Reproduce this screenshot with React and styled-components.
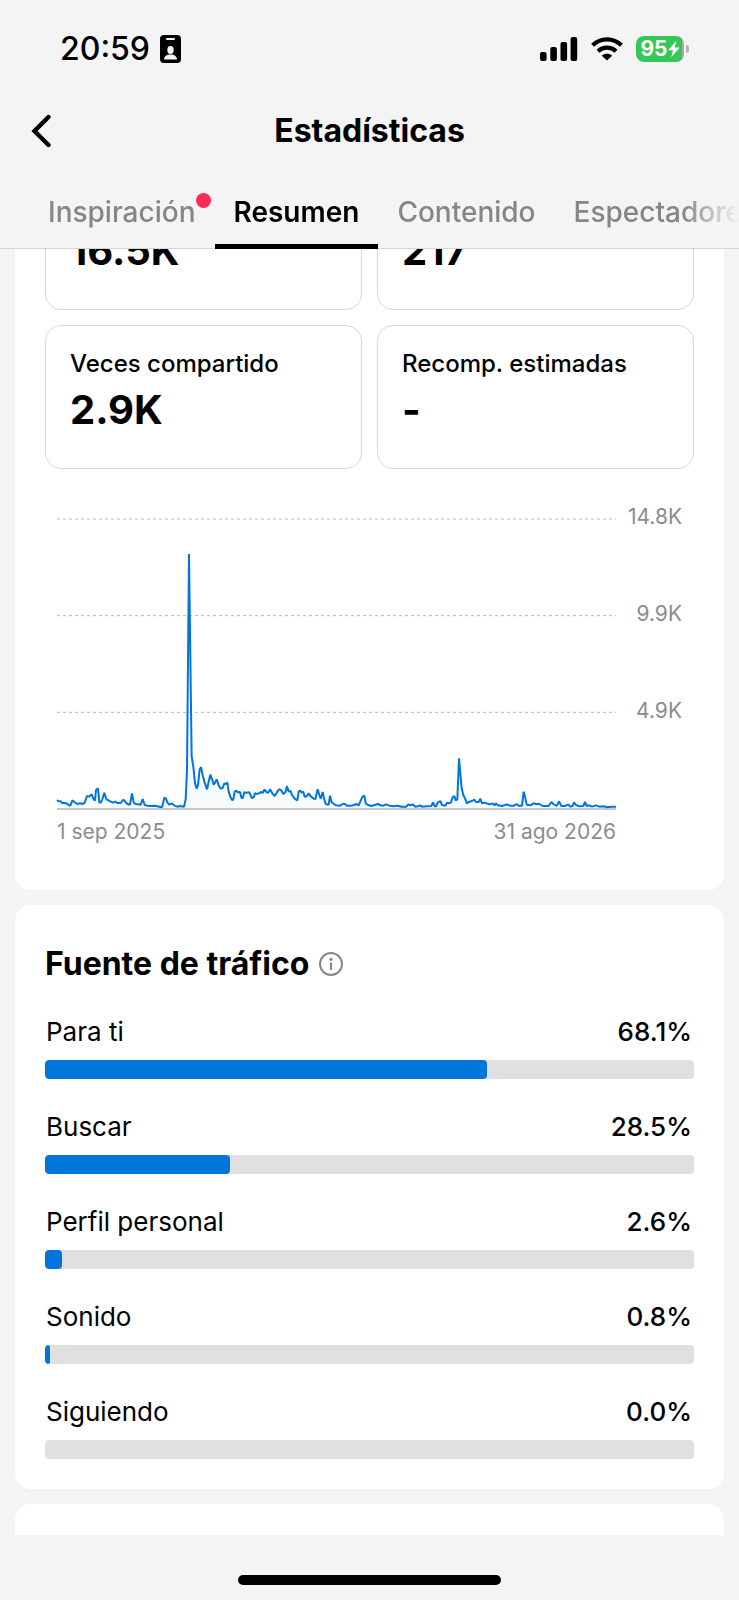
import { useLayoutEffect, useRef } from 'react';
import styled, { createGlobalStyle } from 'styled-components';

const GlobalStyle = createGlobalStyle`
    * {
        box-sizing: border-box;
    }

    body {
        margin: 0;
        background: #f4f4f4;
        color: #000;
        font-family: Inter, "Liberation Sans", sans-serif;
    }

    h1, h2, p, dl, dt, dd, ul {
        margin: 0;
        padding: 0;
    }
`

const Screen = styled.div`
    display: flex;
    flex-direction: column;
    height: 100vh;
    overflow: hidden;
`

// status bar
const StatusBar = styled.div`
    display: flex;
    flex-shrink: 0;
    justify-content: space-between;
    align-items: center;
    height: 98px;
    padding: 0 50px 0 60px;
`

const StatusGroup = styled.div`
    display: flex;
    align-items: center;
    gap: ${({ $gap }) => $gap}px;
`

const Clock = styled.span`
    font-size: 32px;
    font-weight: 500;
    line-height: 40px;
`

const Battery = styled.div`
    display: flex;
    align-items: center;
    gap: 2px;
`

const BatteryBody = styled.div`
    display: flex;
    justify-content: center;
    align-items: center;
    width: 48px;
    height: 26px;
    border-radius: 8px;
    background: linear-gradient(to right, #34c759 46px, #a9a9a9 46px);
    color: #fff;
    font-size: 21px;
    font-weight: 700;
    line-height: 26px;
`

const BatteryCap = styled.span`
    width: 3px;
    height: 8px;
    border-radius: 0 3px 3px 0;
    background: #b4b4b4;
`

// page header
const Header = styled.header`
    display: grid;
    grid-template-columns: 60px 1fr 60px;
    flex-shrink: 0;
    align-items: center;
    height: 66px;
    padding: 0 15px;

    h1 {
        font-size: 32px;
        font-weight: 700;
        line-height: 40px;
        text-align: center;
    }
`

const BackButton = styled.button`
    display: flex;
    align-items: center;
    width: 48px;
    height: 48px;
    padding: 0 0 0 16px;
    border: 0;
    background: none;
    color: #000;
`

const TabBar = styled.nav`
    flex-shrink: 0;
    overflow: hidden;
    box-shadow: inset 0 -1px 0 #d6d6d6;
`

const TabList = styled.div`
    display: flex;
    height: 85px;
    padding-left: 29px;
    mask-image: linear-gradient(to right, #000 calc(100% - 56px), transparent);
`

const Tab = styled.a`
    position: relative;
    flex-shrink: 0;
    padding: 24px 19px 0;
    border-bottom: 5px solid ${({ $active }) => ($active ? '#000' : 'transparent')};
    color: ${({ $active }) => ($active ? '#000' : '#868686')};
    font-size: 28px;
    font-weight: ${({ $active }) => ($active ? 600 : 500)};
    line-height: 48px;
    text-decoration: none;
`

const Dot = styled.span`
    position: absolute;
    top: 29px;
    right: 4px;
    width: 15px;
    height: 15px;
    border-radius: 50%;
    background: #fe2c55;
`

// scrolling content
const Content = styled.main`
    display: flex;
    flex: 1;
    flex-direction: column;
    gap: 15px;
    min-height: 0;
    padding: 0 15px;
    overflow-y: auto;
    scrollbar-width: none;
`

const Card = styled.section`
    flex-shrink: 0;
    min-height: 200px;
    padding: ${({ $padding }) => $padding || '30px'};
    border-radius: 16px;
    background: #fff;
`

const StatGrid = styled.dl`
    display: grid;
    grid-template-columns: 1fr 1fr;
    gap: 15px;
`

const Stat = styled.div`
    height: 144px;
    padding: 22px 24px;
    border: 1px solid #d9d9d9;
    border-radius: 16px;

    dt {
        min-height: 32px;
        font-size: 24px;
        font-weight: 500;
        line-height: 32px;
        white-space: nowrap;
    }

    dd {
        font-size: 40px;
        font-weight: 700;
        line-height: 60px;
    }
`

const ChartBox = styled.div`
    display: grid;
    grid-template-columns: 1fr 66px;
    row-gap: 10px;
    margin-top: 36px;
    padding: 0 12px;
    color: #8c8c8c;
    font-size: 21px;
    line-height: 24px;
`

const Plot = styled.svg`
    display: block;
    width: 100%;
    height: 305px;
    overflow: visible;
`

const YLabels = styled.div`
    display: flex;
    flex-direction: column;
    gap: 73px;
    text-align: right;
`

const XLabels = styled.div`
    display: flex;
    justify-content: space-between;
`

const SectionTitle = styled.div`
    display: flex;
    align-items: center;
    gap: 9px;
    margin-bottom: 30px;

    h2 {
        font-size: 32px;
        font-weight: 700;
        line-height: 40px;
    }
`

const InfoButton = styled.button`
    display: flex;
    padding: 0;
    border: 0;
    background: none;
    color: #868686;
`

const SourceList = styled.ul`
    display: flex;
    flex-direction: column;
    gap: 30px;
    list-style: none;
`

const SourceLabel = styled.div`
    display: flex;
    justify-content: space-between;
    margin-bottom: 10px;
    padding: 0 2px 0 1px;
    font-size: 26px;
    line-height: 36px;
`

const SourceValue = styled.span`
    font-weight: 500;
`

const Track = styled.div`
    height: 19px;
    border-radius: 4px;
    background: #e0e0e0;
    overflow: hidden;
`

const Fill = styled.div`
    height: 100%;
    border-radius: 4px;
    background: #0075dc;
`

const HomeArea = styled.footer`
    display: flex;
    flex-shrink: 0;
    justify-content: center;
    height: 65px;
    padding-top: 40px;
`

const HomeIndicator = styled.div`
    width: 263px;
    height: 10px;
    border-radius: 5px;
    background: #000;
`

const tabs = [
    { label: 'Inspiración', dot: true },
    { label: 'Resumen', active: true },
    { label: 'Contenido' },
    { label: 'Espectadores' },
];

const stats = [
    { value: '16.5K' },
    { value: '217' },
    { label: 'Veces compartido', value: '2.9K' },
    { label: 'Recomp. estimadas', value: '-' },
];

const sources = [
    { label: 'Para ti', value: 68.1 },
    { label: 'Buscar', value: 28.5 },
    { label: 'Perfil personal', value: 2.6 },
    { label: 'Sonido', value: 0.8 },
    { label: 'Siguiendo', value: 0 },
];

// [position on the time axis, height over the baseline]
const series = [
    [0, 27], [5, 23], [11, 23], [16, 18], [23, 18], [31, 16], [37, 10], [41, 12], [46, 26], [53, 20],
    [61, 15], [69, 17], [77, 15], [83, 19], [90, 39], [96, 37], [104, 44], [109, 31], [114, 25], [117, 57],
    [123, 62], [127, 20], [131, 19], [136, 29], [142, 49], [148, 29], [155, 26], [163, 21], [169, 19], [175, 22],
    [181, 18], [191, 18], [199, 28], [205, 22], [211, 15], [219, 13], [225, 47], [230, 20], [235, 15], [243, 14],
    [251, 13], [257, 30], [263, 12], [271, 10], [281, 9], [294, 10], [307, 7], [315, 5], [318, 17], [322, 34],
    [327, 31], [331, 20], [337, 13], [345, 17], [351, 11], [361, 7], [369, 9], [381, 7], [386, 29], [390, 117],
    [396, 765], [404, 157], [409, 127], [414, 77], [419, 61], [423, 72], [428, 119], [432, 125], [437, 102], [443, 79],
    [450, 59], [455, 82], [460, 103], [466, 87], [470, 73], [474, 79], [479, 89], [485, 71], [491, 61], [497, 63],
    [502, 77], [507, 75], [511, 80], [515, 52], [520, 37], [526, 26], [529, 29], [533, 52], [538, 55], [542, 50],
    [549, 51], [553, 35], [557, 32], [562, 50], [569, 49], [577, 50], [585, 32], [591, 37], [594, 48], [599, 45],
    [605, 47], [613, 51], [617, 48], [622, 59], [629, 50], [634, 49], [639, 59], [646, 47], [653, 39], [659, 49],
    [665, 58], [669, 59], [674, 54], [679, 45], [685, 50], [690, 69], [695, 52], [701, 54], [705, 42], [713, 31],
    [721, 26], [725, 52], [729, 56], [734, 49], [739, 52], [743, 37], [749, 38], [755, 47], [761, 38], [769, 32],
    [775, 29], [782, 59], [787, 42], [791, 31], [797, 51], [801, 32], [806, 15], [815, 13], [819, 40], [824, 20],
    [831, 15], [837, 11], [849, 10], [857, 15], [865, 15], [869, 10], [879, 10], [889, 11], [897, 15], [905, 11],
    [911, 25], [917, 38], [922, 40], [926, 17], [933, 12], [943, 9], [953, 12], [963, 15], [971, 11], [979, 10],
    [987, 14], [997, 10], [1009, 8], [1021, 10], [1033, 7], [1047, 7], [1055, 14], [1061, 11], [1067, 14], [1075, 7],
    [1083, 8], [1089, 11], [1095, 7], [1109, 8], [1123, 9], [1128, 20], [1133, 9], [1137, 7], [1142, 19], [1150, 24],
    [1155, 12], [1165, 10], [1170, 19], [1177, 17], [1182, 20], [1187, 35], [1192, 39], [1196, 26], [1201, 29], [1206, 152],
    [1210, 107], [1214, 62], [1219, 42], [1224, 32], [1230, 17], [1237, 22], [1245, 24], [1252, 28], [1257, 21], [1265, 21],
    [1270, 31], [1275, 17], [1283, 19], [1291, 16], [1299, 14], [1307, 17], [1313, 11], [1317, 17], [1323, 11], [1335, 9],
    [1349, 14], [1359, 10], [1371, 10], [1379, 15], [1385, 10], [1395, 10], [1400, 52], [1404, 37], [1409, 13], [1421, 11],
    [1429, 17], [1437, 15], [1447, 15], [1457, 9], [1475, 9], [1483, 21], [1489, 15], [1499, 9], [1506, 23], [1513, 9],
    [1523, 9], [1534, 13], [1541, 7], [1547, 9], [1551, 20], [1557, 12], [1567, 8], [1579, 9], [1584, 21], [1589, 9],
    [1597, 11], [1605, 7], [1617, 11], [1627, 7], [1639, 8], [1651, 5], [1663, 7], [1677, 7],
];

const BASELINE = 912;
const line = series.map(([x, h]) => `${x},${BASELINE - h}`).join(' ');

const BadgeIcon = () => (
    <svg width="21" height="28" viewBox="0 0 21 28" aria-hidden="true">
        <rect width="21" height="28" rx="4" />
        <rect x="6" y="3" width="9" height="2" rx="1" fill="#f4f4f4" />
        <ellipse cx="10.5" cy="15" rx="3.2" ry="4" fill="#f4f4f4" />
        <path d="M4 24.5c.3-3.2 2.600-5 6.500-5s6.200 1.800 6.500 5z" fill="#f4f4f4" />
    </svg>
);

const SignalIcon = () => (
    <svg width="38" height="24" viewBox="0 0 38 24" aria-hidden="true">
        <rect x="0" y="15" width="6.600" height="9" rx="2" />
        <rect x="10.300" y="10" width="6.600" height="14" rx="2" />
        <rect x="20.500" y="5" width="6.600" height="19" rx="2" />
        <rect x="30.600" y="0" width="6.600" height="24" rx="2" />
    </svg>
);

const WifiIcon = () => (
    <svg width="32" height="24" viewBox="0 0 32 24" aria-hidden="true">
        <g fill="none" stroke="#000" strokeWidth="4.200">
            <path d="M1.600 8.200C9.800 .3 22.200 .3 30.400 8.200" />
            <path d="M7 14.200c5.200-4.700 12.800-4.700 18 0" />
        </g>
        <path d="M16 23.500l-5.200-4.800c2.900-2.500 7.500-2.500 10.400 0z" />
    </svg>
);

const BoltIcon = () => (
    <svg width="12" height="18" viewBox="0 0 13 18" fill="#fff" aria-hidden="true">
        <path d="M9 0L.3 10.400h5.200L3.500 18 12.700 7.300H7.300z" />
    </svg>
);

const ViewsChart = () => (
    <ChartBox>
        <Plot viewBox="0 0 1677 915" preserveAspectRatio="none" role="img" aria-label="Visualizaciones">
            {[42, 332, 622].map((y) => (
                <line
                    key={y}
                    x1="0"
                    x2="1677"
                    y1={y}
                    y2={y}
                    stroke="#b8b8b8"
                    strokeDasharray="3 3"
                    vectorEffect="non-scaling-stroke"
                />
            ))}
            <polygon points={`0,${BASELINE} ${line} 1677,${BASELINE}`} fill="#0075dc" fillOpacity="0.03" />
            <line x1="0" x2="1677" y1={BASELINE} y2={BASELINE} stroke="#c8c8c8" strokeWidth="2" vectorEffect="non-scaling-stroke" />
            <polyline
                points={line}
                fill="none"
                stroke="#0075dc"
                strokeWidth="2"
                strokeLinejoin="bevel"
                vectorEffect="non-scaling-stroke"
            />
        </Plot>
        <YLabels>
            <span>14.8K</span>
            <span>9.9K</span>
            <span>4.9K</span>
        </YLabels>
        <XLabels>
            <span>1 sep 2025</span>
            <span>31 ago 2026</span>
        </XLabels>
    </ChartBox>
);

const App = () => {
    const contentRef = useRef(null);

    // open with the last stats and the chart in view
    useLayoutEffect(() => {
        contentRef.current.scrollTop = 113;
    }, []);

    return (
        <>
            <GlobalStyle />
            <Screen>
                <StatusBar>
                    <StatusGroup $gap={10}>
                        <Clock>20:59</Clock>
                        <BadgeIcon />
                    </StatusGroup>
                    <StatusGroup $gap={13}>
                        <SignalIcon />
                        <WifiIcon />
                        <Battery>
                            <BatteryBody>
                                95
                                <BoltIcon />
                            </BatteryBody>
                            <BatteryCap />
                        </Battery>
                    </StatusGroup>
                </StatusBar>

                <Header>
                    <BackButton aria-label="Volver">
                        <svg width="20" height="34" viewBox="0 0 20 34" fill="none" stroke="#000" strokeWidth="4.400" strokeLinecap="round">
                            <path d="M17.500 3L3.500 17l14 14" />
                        </svg>
                    </BackButton>
                    <h1>Estadísticas</h1>
                </Header>

                <TabBar>
                    <TabList>
                        {tabs.map(({ label, active, dot }) => (
                            <Tab key={label} href="#" $active={active}>
                                {label}
                                {dot && <Dot />}
                            </Tab>
                        ))}
                    </TabList>
                </TabBar>

                <Content ref={contentRef}>
                    <Card $padding="30px 30px 46px">
                        <StatGrid>
                            {stats.map(({ label, value }) => (
                                <Stat key={value}>
                                    <dt>{label}</dt>
                                    <dd>{value}</dd>
                                </Stat>
                            ))}
                        </StatGrid>
                        <ViewsChart />
                    </Card>

                    <Card $padding="39px 30px 30px">
                        <SectionTitle>
                            <h2>Fuente de tráfico</h2>
                            <InfoButton aria-label="Información">
                                <svg width="26" height="26" viewBox="0 0 26 26" fill="none" stroke="currentColor" strokeWidth="2">
                                    <circle cx="13" cy="13" r="11" />
                                    <path d="M13 11.500v7.500" />
                                    <circle cx="13" cy="8.300" r="1.600" fill="currentColor" stroke="none" />
                                </svg>
                            </InfoButton>
                        </SectionTitle>
                        <SourceList>
                            {sources.map(({ label, value }) => (
                                <li key={label}>
                                    <SourceLabel>
                                        <span>{label}</span>
                                        <SourceValue>{value.toFixed(1)}%</SourceValue>
                                    </SourceLabel>
                                    <Track>
                                        <Fill style={{ width: `${value}%` }} />
                                    </Track>
                                </li>
                            ))}
                        </SourceList>
                    </Card>

                    <Card />
                </Content>

                <HomeArea>
                    <HomeIndicator />
                </HomeArea>
            </Screen>
        </>
    );
};

export default App;
